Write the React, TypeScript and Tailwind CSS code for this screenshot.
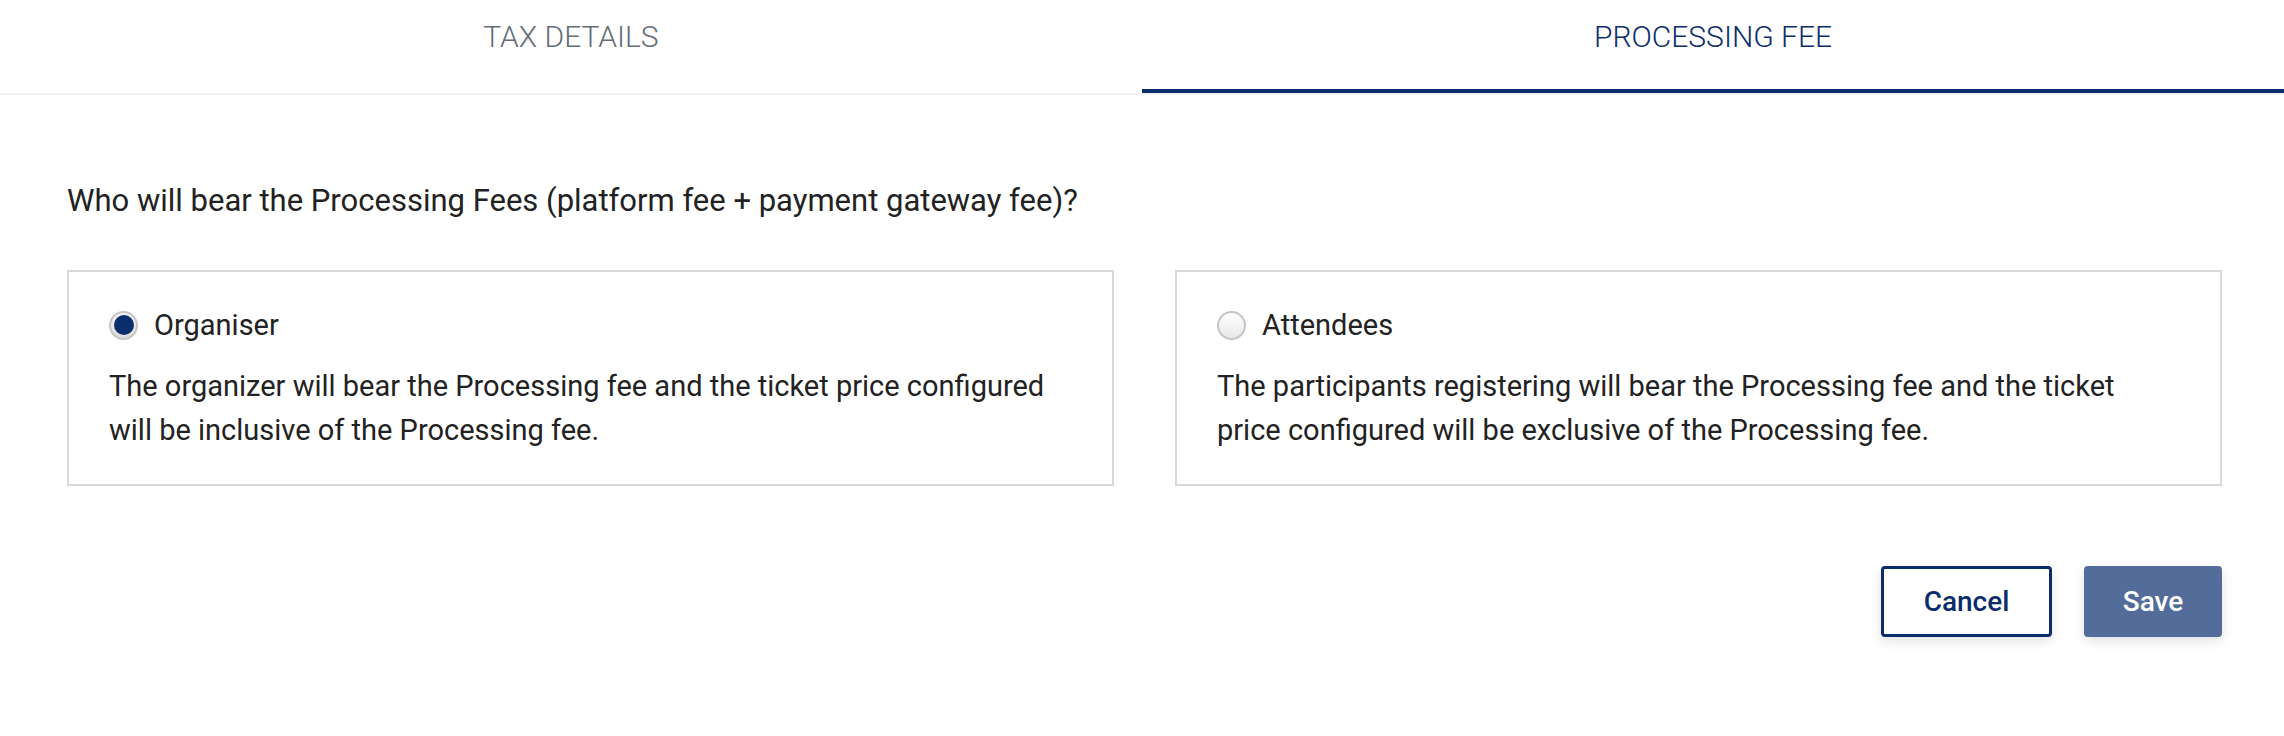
import { useState } from "react";

type Bearer = "organiser" | "attendees";

const options: { id: Bearer; label: string; description: string }[] = [
  {
    id: "organiser",
    label: "Organiser",
    description:
      "The organizer will bear the Processing fee and the ticket price configured will be inclusive of the Processing fee.",
  },
  {
    id: "attendees",
    label: "Attendees",
    description:
      "The participants registering will bear the Processing fee and the ticket price configured will be exclusive of the Processing fee.",
  },
];

export default function App() {
  const [tab, setTab] = useState<"tax" | "fee">("fee");
  const [bearer, setBearer] = useState<Bearer>("organiser");

  return (
    <div className="min-h-screen w-full bg-white font-['Roboto',sans-serif] text-[#222222]">
      {/* Tabs */}
      <div className="flex border-b-2 border-[#f2f2f2]">
        {[
          { id: "tax" as const, label: "TAX DETAILS" },
          { id: "fee" as const, label: "PROCESSING FEE" },
        ].map((t) => (
          <button
            key={t.id}
            onClick={() => setTab(t.id)}
            className={`flex h-[93px] flex-1 items-center justify-center border-b-4 pb-[16px] text-[30px] font-light ${
              tab === t.id
                ? "border-[#0b2d6b] text-[#0b2d6b]"
                : "border-transparent text-[#646d78]"
            }`}
          >
            {t.label}
          </button>
        ))}
      </div>

      <div className="pl-[67px] pr-[62px] pt-[86px]">
        <p className="text-[31px] leading-[40px]">
          Who will bear the Processing Fees (platform fee + payment gateway fee)?
        </p>

        <div className="mt-[49px] grid grid-cols-2 gap-[61px]">
          {options.map((o) => (
            <label
              key={o.id}
              className="flex h-[216px] cursor-pointer flex-col border-2 border-[#d9d9d9] pl-[40px] pr-[58px] pt-[35px]"
              onClick={() => setBearer(o.id)}
            >
              <div className="flex items-center gap-[16px]">
                <span
                  className={`flex h-[29px] w-[29px] shrink-0 items-center justify-center rounded-full border-2 border-[#c6c6c6] ${
                    bearer === o.id
                      ? "bg-gradient-to-b from-[#f4f4f4] to-[#dcdcdc]"
                      : "bg-gradient-to-b from-white to-[#e8e8e8]"
                  }`}
                >
                  {bearer === o.id && (
                    <span className="h-[20px] w-[20px] rounded-full bg-[#0b2d6b]" />
                  )}
                </span>
                <span className="text-[29px] leading-[36px]">{o.label}</span>
              </div>
              <p className="mt-[21px] text-[29px] leading-[44px]">
                {o.description}
              </p>
            </label>
          ))}
        </div>

        <div className="mt-[80px] flex justify-end gap-[32px]">
          <button className="h-[71px] w-[171px] rounded-[4px] border-[3px] border-[#0b2d6b] bg-white text-[28px] font-medium text-[#0b2d6b] shadow-[0_4px_12px_rgba(0,0,0,0.12)]">
            Cancel
          </button>
          <button className="h-[71px] w-[138px] rounded-[4px] bg-[#536c9a] text-[28px] font-medium text-white shadow-[0_4px_12px_rgba(0,0,0,0.12)]">
            Save
          </button>
        </div>
      </div>
    </div>
  );
}
